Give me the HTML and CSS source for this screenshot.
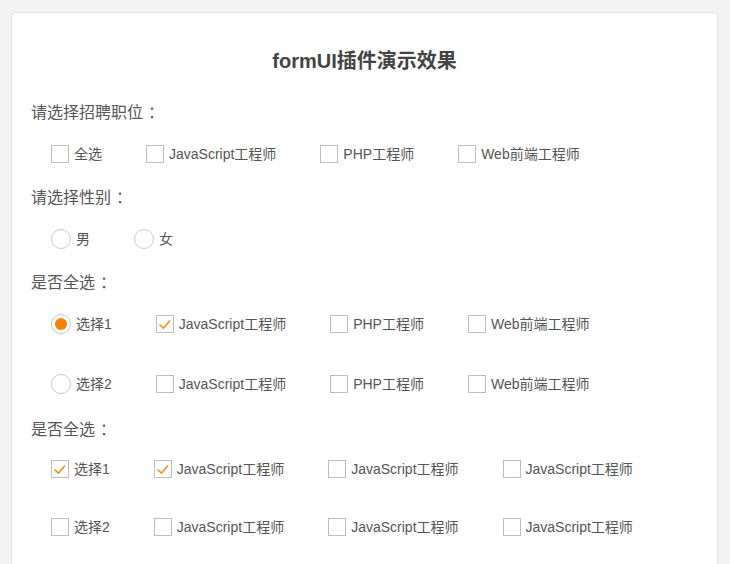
FILE: index.html
```html
<!DOCTYPE html>
<html lang="zh">
<head>
<meta charset="utf-8">
<title>formUI插件演示效果</title>
<link rel="stylesheet" href="styles.css">
</head>
<body>
<div class="card">
  <h1 class="title">formUI插件演示效果</h1>

  <div class="label">请选择招聘职位<span class="colon">：</span></div>
  <div class="row">
    <label class="item"><span class="cb"></span><span class="txt">全选</span></label>
    <label class="item"><span class="cb"></span><span class="txt">JavaScript工程师</span></label>
    <label class="item"><span class="cb"></span><span class="txt">PHP工程师</span></label>
    <label class="item"><span class="cb"></span><span class="txt">Web前端工程师</span></label>
  </div>

  <div class="label">请选择性别<span class="colon">：</span></div>
  <div class="row">
    <label class="item"><span class="rd"></span><span class="txt">男</span></label>
    <label class="item"><span class="rd"></span><span class="txt">女</span></label>
  </div>

  <div class="label">是否全选<span class="colon">：</span></div>
  <div class="row">
    <label class="item"><span class="rd on"></span><span class="txt">选择1</span></label>
    <label class="item"><span class="cb on"><svg viewBox="0 0 18 18"><path d="M3.5 9.5 L7.5 13 L14 5.5" fill="none" stroke="#ff8a1a" stroke-width="1.6"/></svg></span><span class="txt">JavaScript工程师</span></label>
    <label class="item"><span class="cb"></span><span class="txt">PHP工程师</span></label>
    <label class="item"><span class="cb"></span><span class="txt">Web前端工程师</span></label>
  </div>
  <div class="row gap">
    <label class="item"><span class="rd"></span><span class="txt">选择2</span></label>
    <label class="item"><span class="cb"></span><span class="txt">JavaScript工程师</span></label>
    <label class="item"><span class="cb"></span><span class="txt">PHP工程师</span></label>
    <label class="item"><span class="cb"></span><span class="txt">Web前端工程师</span></label>
  </div>

  <div class="label low">是否全选<span class="colon">：</span></div>
  <div class="row">
    <label class="item"><span class="cb on"><svg viewBox="0 0 18 18"><path d="M3.5 9.5 L7.5 13 L14 5.5" fill="none" stroke="#ff8a1a" stroke-width="1.6"/></svg></span><span class="txt">选择1</span></label>
    <label class="item"><span class="cb on"><svg viewBox="0 0 18 18"><path d="M3.5 9.5 L7.5 13 L14 5.5" fill="none" stroke="#ff8a1a" stroke-width="1.6"/></svg></span><span class="txt">JavaScript工程师</span></label>
    <label class="item"><span class="cb"></span><span class="txt">JavaScript工程师</span></label>
    <label class="item"><span class="cb"></span><span class="txt">JavaScript工程师</span></label>
  </div>
  <div class="row gap small">
    <label class="item"><span class="cb"></span><span class="txt">选择2</span></label>
    <label class="item"><span class="cb"></span><span class="txt">JavaScript工程师</span></label>
    <label class="item"><span class="cb"></span><span class="txt">JavaScript工程师</span></label>
    <label class="item"><span class="cb"></span><span class="txt">JavaScript工程师</span></label>
  </div>
</div>
</body>
</html>
```
FILE: styles.css
```css
html, body {
  margin: 0;
  padding: 0;
  background: #f3f3f3;
  font-family: "Liberation Sans", "Noto Sans CJK SC", sans-serif;
  color: #555;
}
.card {
  margin: 12px 12px 0 11px;
  background: #fff;
  border: 1px solid #e3e3e3;
  border-radius: 5px;
  padding: 0 19px 40px 19px;
  min-height: 600px;
}
.title {
  margin: 33px 0 20px 0;
  font-size: 20px;
  line-height: 30px;
  font-weight: bold;
  color: #444;
  text-align: center;
}
.label {
  height: 30px;
  line-height: 30px;
  font-size: 16px;
  color: #555;
  font-family: "Noto Sans CJK SC", sans-serif;
}
.colon {
  margin-left: 5px;
}
.label.low {
  height: 28px;
  padding-top: 2px;
}
.row {
  display: flex;
  align-items: center;
  height: 55px;
  padding-left: 20px;
  gap: 44px;
}
.row.gap {
  margin-top: 5px;
}
.row.gap.small {
  margin-top: 3px;
}
.item {
  display: flex;
  align-items: center;
  gap: 5px;
  font-size: 14px;
}
.txt {
  line-height: 20px;
}
.cb {
  width: 16px;
  height: 16px;
  border: 1px solid #bdbdbd;
  background: #fff;
  display: block;
  position: relative;
}
.cb svg {
  position: absolute;
  left: -1px;
  top: -1px;
  width: 18px;
  height: 18px;
}
.rd {
  width: 18px;
  height: 18px;
  border: 1px solid #c8c8c8;
  border-radius: 50%;
  display: flex;
  align-items: center;
  justify-content: center;
}
.rd.on::after {
  content: "";
  width: 12px;
  height: 12px;
  border-radius: 50%;
  background: #ff8000;
}
```
